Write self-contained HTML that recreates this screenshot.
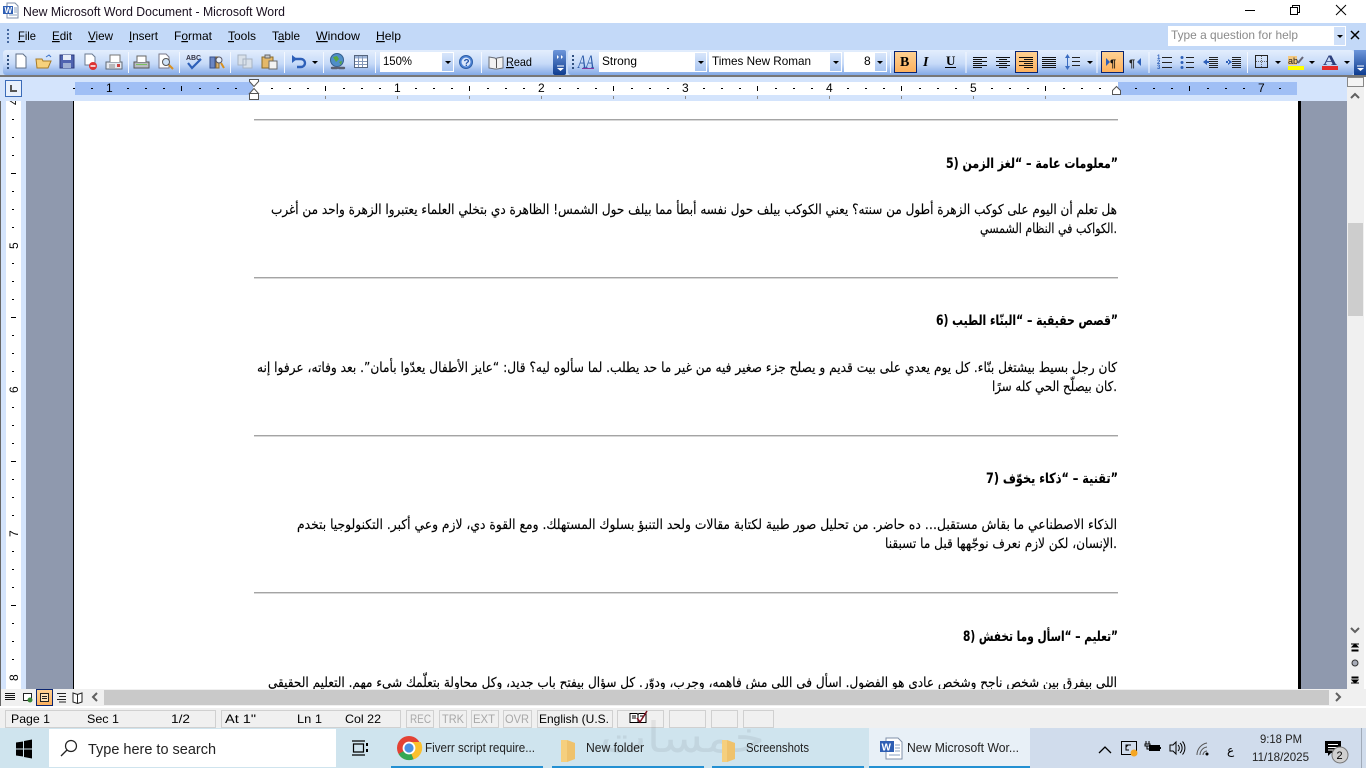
<!DOCTYPE html>
<html><head><meta charset="utf-8"><style>html,body{margin:0;padding:0;width:1366px;height:768px;overflow:hidden;background:#fff}svg{display:block}
text{font-family:"Liberation Sans","DejaVu Sans",sans-serif;font-size:12px;fill:#000}
.ar{font-family:"DejaVu Sans",sans-serif;font-size:13.500px;direction:rtl;stroke:#000;stroke-width:.15px}
.h{font-weight:bold;font-size:14px;stroke-width:.1px}
.s{font-size:12px;fill:#111}.g{fill:#a8a8a8}
.t{font-size:13px;fill:#222}</style></head><body>
<svg width="1366" height="768" viewBox="0 0 1366 768" xmlns="http://www.w3.org/2000/svg">
<defs>
<linearGradient id="tb" x1="0" y1="0" x2="0" y2="1"><stop offset="0" stop-color="#e3eefd"/><stop offset=".55" stop-color="#c6daf8"/><stop offset="1" stop-color="#83a9e6"/></linearGradient>
<linearGradient id="or" x1="0" y1="0" x2="0" y2="1"><stop offset="0" stop-color="#ffd294"/><stop offset="1" stop-color="#fdb05c"/></linearGradient>
<linearGradient id="dd" x1="0" y1="0" x2="0" y2="1"><stop offset="0" stop-color="#d8e6fb"/><stop offset="1" stop-color="#a9c5f1"/></linearGradient>
<linearGradient id="ch" x1="0" y1="0" x2="0" y2="1"><stop offset="0" stop-color="#6d96da"/><stop offset="1" stop-color="#0e3c8f"/></linearGradient>
<pattern id="hr" x="253" y="0" width="144" height="768" patternUnits="userSpaceOnUse"><path fill="#000" d="M18 88h2v1h-2zM36 88h2v1h-2zM54 88h2v1h-2zM90 88h2v1h-2zM108 88h2v1h-2zM126 88h2v1h-2zM72 86h1v5h-1z"/></pattern>
<pattern id="vr" x="0" y="245" width="40" height="144" patternUnits="userSpaceOnUse"><path fill="#000" d="M12 18h2v1h-2zM12 36h2v1h-2zM12 54h2v1h-2zM12 90h2v1h-2zM12 108h2v1h-2zM12 126h2v1h-2zM11 72h5v1h-5z"/></pattern>
<path id="ar" d="M0 0h6l-3 3z" fill="#000"/>
</defs>

<!-- title bar -->
<rect width="1366" height="23" fill="#fff"/>
<g><path d="M7 3h8l3 3v12H7z" fill="#fff" stroke="#7d8ea8"/><rect x="3" y="6" width="10" height="8" fill="#2f5fb4"/><text x="4.500" y="13" style="font-size:8px;font-weight:bold;fill:#fff">W</text><path d="M14 8h3M14 10h3M14 12h3M9 15h8" stroke="#8aa0c0"/></g>
<text x="23" y="16" textLength="262" lengthAdjust="spacingAndGlyphs" style="font-size:12.500px;fill:#1a1020">New Microsoft Word Document - Microsoft Word</text>
<path d="M1245 10.500h10" stroke="#000"/><path d="M1290.500 7.500h7v7h-7zM1292.500 7V5.500h7v7H1298" fill="none" stroke="#000"/><path d="M1336 5l10 10M1346 5l-10 10" stroke="#000" fill="none"/>

<!-- menu bar -->
<rect y="23" width="1366" height="27" fill="#c3d9f8"/>
<path d="M7 29h2v2H7zM7 33h2v2H7zM7 37h2v2H7zM7 41h2v2H7z" fill="#46689f"/>
<g style="font-size:12px">
<text x="18" y="40" textLength="18" lengthAdjust="spacingAndGlyphs"><tspan text-decoration="underline">F</tspan>ile</text>
<text x="52" y="40" textLength="20" lengthAdjust="spacingAndGlyphs"><tspan text-decoration="underline">E</tspan>dit</text>
<text x="88" y="40" textLength="25" lengthAdjust="spacingAndGlyphs"><tspan text-decoration="underline">V</tspan>iew</text>
<text x="129" y="40" textLength="29" lengthAdjust="spacingAndGlyphs"><tspan text-decoration="underline">I</tspan>nsert</text>
<text x="174" y="40" textLength="38" lengthAdjust="spacingAndGlyphs">F<tspan text-decoration="underline">o</tspan>rmat</text>
<text x="228" y="40" textLength="28" lengthAdjust="spacingAndGlyphs"><tspan text-decoration="underline">T</tspan>ools</text>
<text x="272" y="40" textLength="28" lengthAdjust="spacingAndGlyphs">T<tspan text-decoration="underline">a</tspan>ble</text>
<text x="316" y="40" textLength="44" lengthAdjust="spacingAndGlyphs"><tspan text-decoration="underline">W</tspan>indow</text>
<text x="376" y="40" textLength="25" lengthAdjust="spacingAndGlyphs"><tspan text-decoration="underline">H</tspan>elp</text>
</g>
<rect x="1168" y="26" width="178" height="20" fill="#fff"/><rect x="1334" y="27" width="11" height="18" fill="#cfe0f9"/>
<text x="1171" y="39" textLength="127" lengthAdjust="spacingAndGlyphs" style="font-size:12px;fill:#8a8a8a">Type a question for help</text>
<use href="#ar" x="1337" y="35"/>
<path d="M1351 31l8 8M1359 31l-8 8" stroke="#000" stroke-width="1.500"/>

<!-- toolbars -->
<rect y="50" width="1366" height="25" fill="#c3d9f8"/>
<rect x="3" y="50" width="552" height="25" rx="3" fill="url(#tb)"/>
<rect x="553" y="50" width="13" height="25" rx="2" fill="url(#ch)"/>
<rect x="568" y="50" width="786" height="25" rx="3" fill="url(#tb)"/>
<rect x="1354" y="50" width="12" height="25" fill="url(#ch)"/>
<path d="M557 55l2 2-2 2zM561 55l2 2-2 2zM557 68h7l-3.500 3z" fill="#fff" stroke="none"/>
<path d="M557 66h7" stroke="#fff"/>
<path d="M1357 68h7l-3.500 3z" fill="#fff"/><path d="M1357 66h7" stroke="#fff"/>
<rect y="75" width="1366" height="2" fill="#777"/>
<path d="M7 55h2v2H7zM7 59h2v2H7zM7 63h2v2H7zM7 67h2v2H7zM572 55h2v2h-2zM572 59h2v2h-2zM572 63h2v2h-2zM572 67h2v2h-2z" fill="#30507f"/>

<!-- std toolbar icons -->
<path d="M16 54h7l3 3v11H16z" fill="#fff" stroke="#5f6f88"/>
<path d="M36 59h6l1 2h8l-3 7H37z" fill="#f7d17c" stroke="#a77a26"/><path d="M46 57l3-2 2 2" stroke="#3a70c8" fill="none"/>
<rect x="60" y="55" width="14" height="13" fill="#4f63b0" stroke="#2d3b7c"/><rect x="63" y="55" width="8" height="5" fill="#e6ecf8"/><rect x="63" y="63" width="8" height="5" fill="#9fb0d4"/>
<path d="M85 54h7l3 3v8H85z" fill="#fff" stroke="#6b7a90"/><circle cx="93" cy="66" r="4" fill="#d33"/><path d="M90.500 66h5" stroke="#fff" stroke-width="1.500"/>
<path d="M106 62h16v7h-16z" fill="#e7eaf0" stroke="#5f6a78"/><path d="M110 62v-7h10v7" fill="#fff" stroke="#777"/><path d="M109 65h6M109 67h6" stroke="#888"/><rect x="117" y="64" width="3" height="3" fill="#c44"/>
<path d="M128.500 52v21" stroke="#f4f8ff"/>
<path d="M134 62h15v6h-15z" fill="#b9bcc2" stroke="#555"/><path d="M137 62v-6h9v6" fill="#fff" stroke="#666"/><rect x="136" y="64" width="11" height="1" fill="#7bbf5d"/>
<path d="M159 54h7l3 3v11h-10z" fill="#fff" stroke="#778"/><circle cx="166" cy="62" r="3.500" fill="#cfe3f8" stroke="#555"/><path d="M169 65l4 4" stroke="#d89020" stroke-width="2"/>
<path d="M179.500 52v21" stroke="#f4f8ff"/>
<text x="186" y="60" textLength="15" lengthAdjust="spacingAndGlyphs" style="font-size:7px;font-weight:bold;fill:#334">ABC</text>
<path d="M188 63l4 5 9-9" fill="none" stroke="#2d5fb8" stroke-width="2.200"/>
<path d="M210 57h5v11h-5z" fill="#6a86c4" stroke="#36508c"/><path d="M216 57h3v11h-3z" fill="#d8b070" stroke="#8a6a30"/><circle cx="219" cy="60" r="3" fill="#e8f0fa" stroke="#556"/><path d="M221 63l3 5" stroke="#d89020" stroke-width="2"/>
<path d="M230.500 52v21" stroke="#f4f8ff"/>
<path d="M238 55h8v10h-8zM243 59h9v9h-9z" fill="#d9e1ea" stroke="#a7b3c2"/>
<path d="M262 57h11v11h-11z" fill="#e4b868" stroke="#8a6a28"/><path d="M265 55h5v3h-5z" fill="#c9c9c9" stroke="#666"/><path d="M269 61h8v8h-8z" fill="#f3f3f3" stroke="#6a6a6a"/>
<path d="M284.500 52v21" stroke="#f4f8ff"/>
<path d="M293 59h8a4 4 0 0 1 0 8h-4" fill="none" stroke="#2d5fb8" stroke-width="2.400"/><path d="M292 55v8l5-4z" fill="#2d5fb8"/><use href="#ar" x="312" y="61"/>
<path d="M323.500 52v21" stroke="#f4f8ff"/>
<circle cx="337" cy="60" r="6.500" fill="#4f8ec8" stroke="#36608e"/><path d="M333 57l4-1 2 3-3 3zM339 62l3-1-1 4z" fill="#5aa83c"/><path d="M332 68h5M339 68h5" stroke="#5a6070" stroke-width="2.400" stroke-linecap="round"/>
<rect x="354.500" y="55.500" width="13" height="12" fill="#fff" stroke="#56657d"/><rect x="355" y="56" width="12" height="2.500" fill="#9db4d8"/><path d="M355 61.500h12M355 64.500h12M358.500 56v11M362.500 56v11" stroke="#8397b8"/>
<path d="M375.500 52v21" stroke="#f4f8ff"/>
<rect x="380" y="52" width="74" height="20" fill="#fff"/><rect x="442" y="53" width="11" height="18" fill="url(#dd)"/><use href="#ar" x="445" y="61"/>
<text x="383" y="65" textLength="29" lengthAdjust="spacingAndGlyphs" style="font-size:12px">150%</text>
<circle cx="466" cy="62" r="6.500" fill="#4d82d4" stroke="#2d5fa8"/><circle cx="466" cy="62" r="4.500" fill="#dbe8fb"/><text x="463.500" y="66" style="font-size:10px;font-weight:bold;fill:#2353a8">?</text>
<path d="M481.500 52v21" stroke="#f4f8ff"/>
<path d="M489 57l6 1 1 1 1-1 6-1v11l-6 1h-2l-6-1z" fill="#f2f2f2" stroke="#6a6f78"/><path d="M496.500 59v9" stroke="#555"/>
<text x="506" y="66" textLength="26" lengthAdjust="spacingAndGlyphs" style="font-size:12px"><tspan text-decoration="underline">R</tspan>ead</text>

<!-- format toolbar -->
<text x="578" y="68" textLength="16" lengthAdjust="spacingAndGlyphs" style="font-family:'Liberation Serif',serif;font-style:italic;font-size:19px;fill:#2b5aa8">AA</text><path d="M582 68.500h12" stroke="#8a3aa0"/>
<rect x="599" y="52" width="108" height="20" fill="#fff"/><rect x="695" y="53" width="11" height="18" fill="url(#dd)"/><use href="#ar" x="698" y="61"/>
<text x="602" y="65" textLength="35" lengthAdjust="spacingAndGlyphs" style="font-size:12px">Strong</text>
<rect x="709" y="52" width="133" height="20" fill="#fff"/><rect x="830" y="53" width="11" height="18" fill="url(#dd)"/><use href="#ar" x="833" y="61"/>
<text x="712" y="65" textLength="99" lengthAdjust="spacingAndGlyphs" style="font-size:12px">Times New Roman</text>
<rect x="844" y="52" width="43" height="20" fill="#fff"/><rect x="875" y="53" width="11" height="18" fill="url(#dd)"/><use href="#ar" x="877" y="61"/>
<text x="864" y="65" style="font-size:12px">8</text>
<path d="M890.500 52v21" stroke="#f4f8ff"/>
<rect x="894.500" y="51.500" width="22" height="21" fill="url(#or)" stroke="#0a2470"/>
<text x="900" y="66" style="font-family:'Liberation Serif',serif;font-weight:bold;font-size:14px">B</text>
<text x="923" y="66" style="font-family:'Liberation Serif',serif;font-weight:bold;font-style:italic;font-size:14px">I</text>
<text x="946" y="65" style="font-family:'Liberation Serif',serif;font-weight:bold;font-size:13px" textLength="10">U</text><path d="M945 67.500h11" stroke="#000"/>
<path d="M966 52v21" stroke="#f4f8ff"/>
<path d="M973 57.500h14M973 59.500h9M973 61.500h14M973 63.500h9M973 65.500h14M973 67.500h9" stroke="#111"/>
<path d="M996 57.500h14M999 59.500h8M996 61.500h14M999 63.500h8M996 65.500h14M999 67.500h8" stroke="#111"/>
<rect x="1015.500" y="51.500" width="22" height="21" fill="url(#or)" stroke="#0a2470"/>
<path d="M1019 57.500h14M1024 59.500h9M1019 61.500h14M1024 63.500h9M1019 65.500h14M1024 67.500h9" stroke="#111"/>
<path d="M1042 57.500h14M1042 59.500h14M1042 61.500h14M1042 63.500h14M1042 65.500h14M1042 67.500h14" stroke="#111"/>
<path d="M1067.500 58v9" stroke="#3a6bc0"/><path d="M1065 58l2.500-4 2.500 4zM1065 66l2.500 4 2.500-4z" fill="#3a6bc0"/><path d="M1072 57.500h8M1072 61.500h8M1072 65.500h8" stroke="#222"/>
<use href="#ar" x="1087" y="61"/>
<path d="M1097 52v21" stroke="#f4f8ff"/>
<rect x="1101.500" y="51.500" width="22" height="21" fill="url(#or)" stroke="#0a2470"/>
<path d="M1106 58v8l4-4z" fill="#2d5fb8"/><text x="1110" y="67" style="font-weight:bold;font-size:11px;fill:#111">¶</text>
<text x="1129" y="67" style="font-weight:bold;font-size:11px;fill:#222">¶</text><path d="M1141 58v8l-4-4z" fill="#2d5fb8"/>
<path d="M1149 52v21" stroke="#f4f8ff"/>
<text x="1157" y="59" style="font-size:6px;fill:#2d5fb8;font-weight:bold">1</text><text x="1157" y="64" style="font-size:6px;fill:#2d5fb8;font-weight:bold">2</text><text x="1157" y="69" style="font-size:6px;fill:#2d5fb8;font-weight:bold">3</text>
<path d="M1162 57.500h10M1162 62.500h10M1162 67.500h10" stroke="#222"/>
<circle cx="1182" cy="57.500" r="1.500" fill="#2d5fb8"/><circle cx="1182" cy="62.500" r="1.500" fill="#2d5fb8"/><circle cx="1182" cy="67.500" r="1.500" fill="#2d5fb8"/><path d="M1186 57.500h8M1186 62.500h8M1186 67.500h8" stroke="#222"/>
<path d="M1209 57.500h9M1209 59.500h9M1209 61.500h9M1209 63.500h9M1209 65.500h9M1209 67.500h9" stroke="#222"/><path d="M1203 62l4-3v6zM1205 61h4v2h-4z" fill="#2d5fb8"/>
<path d="M1232 57.500h9M1232 59.500h9M1232 61.500h9M1232 63.500h9M1232 65.500h9M1232 67.500h9" stroke="#222"/><path d="M1232 62l-4-3v6zM1226 61h3v2h-3z" fill="#2d5fb8"/>
<path d="M1247.500 52v21" stroke="#f4f8ff"/>
<rect x="1255.500" y="55.500" width="12" height="12" fill="none" stroke="#222"/><path d="M1261.500 56v11M1256 61.500h11" stroke="#666" stroke-dasharray="1 1"/>
<use href="#ar" x="1275" y="61"/>
<rect x="1288" y="56" width="9" height="9" fill="#f3c880"/><text x="1288" y="64" style="font-size:9px;fill:#222">ab</text><path d="M1298 63l5-6" stroke="#667" stroke-width="2"/><rect x="1288" y="66" width="16" height="4" fill="#ff0"/>
<use href="#ar" x="1309" y="61"/>
<text x="1323" y="65" textLength="14" lengthAdjust="spacingAndGlyphs" style="font-family:'Liberation Serif',serif;font-weight:bold;font-size:15px;fill:#2d3f7c">A</text><rect x="1322" y="66" width="16" height="4" fill="#e32b2b"/>
<use href="#ar" x="1344" y="61"/>

<!-- workspace -->
<rect y="101" width="1366" height="588" fill="#fff"/>
<rect x="0" y="77" width="1" height="630" fill="#666"/><rect x="1" y="101" width="5" height="588" fill="#d4e4fc"/>
<rect x="21" y="101" width="5" height="588" fill="#d4e4fc"/>
<rect x="6" y="101" width="15" height="588" fill="url(#vr)"/>
<g style="font-size:11px"><text transform="translate(18 249) rotate(-90)">5</text><text transform="translate(18 393) rotate(-90)">6</text><text transform="translate(18 537) rotate(-90)">7</text><text transform="translate(18 681) rotate(-90)">8</text><text transform="translate(18 105) rotate(-90)">4</text></g>
<rect x="26" y="101" width="47" height="588" fill="#8f99ae"/><rect x="73" y="101" width="1" height="588" fill="#000"/>
<rect x="1298" y="101" width="3" height="588" fill="#000"/><rect x="1301" y="101" width="46" height="588" fill="#8f99ae"/>

<!-- ruler -->
<rect y="77" width="1366" height="24" fill="#d4e4fc"/>
<rect x="5.500" y="80.500" width="16" height="16" fill="#e8f0fc" stroke="#3a6bb8"/><path d="M11 85v6h6" fill="none" stroke="#555" stroke-width="2"/>
<rect x="75" y="82" width="178" height="13" fill="#a0bff5"/><rect x="253" y="82" width="865" height="13" fill="#fff"/><rect x="1118" y="82" width="179" height="13" fill="#a0bff5"/>
<rect x="73" y="82" width="1224" height="13" fill="url(#hr)"/>
<path d="M325 96h1v3h-1zM397 96h1v3h-1zM469 96h1v3h-1zM541 96h1v3h-1zM613 96h1v3h-1zM685 96h1v3h-1zM757 96h1v3h-1zM829 96h1v3h-1zM901 96h1v3h-1zM973 96h1v3h-1zM1045 96h1v3h-1z" fill="#8a8a8a"/>
<g style="font-size:11px"><text x="106" y="92">1</text><text x="394" y="92">1</text><text x="538" y="92">2</text><text x="682" y="92">3</text><text x="826" y="92">4</text><text x="970" y="92">5</text><text x="1258" y="92">7</text></g>
<path d="M249.500 79.500h9v2l-4.500 5-4.500-5z" fill="#fff" stroke="#555"/><path d="M249.500 93.500l4.500-5 4.500 5v0h-9z" fill="#fff" stroke="#555"/><rect x="249.500" y="93.500" width="9" height="6" fill="#fff" stroke="#555"/>
<path d="M1112.500 94.500v-4l4-4 4 4v4z" fill="#fff" stroke="#555"/>

<!-- document -->
<path d="M254 119.500h864M254 277.500h864M254 435.500h864M254 592.500h864" stroke="#a4a4a4"/>
<path d="M254 120.500h864M254 278.500h864M254 436.500h864M254 593.500h864" stroke="#d8d8d8"/>

<text class="ar h" x="1118" y="168" text-anchor="start" textLength="172" lengthAdjust="spacingAndGlyphs">”معلومات عامة – “لغز الزمن (5</text>
<text class="ar" x="1117" y="214" text-anchor="start" textLength="846" lengthAdjust="spacingAndGlyphs">هل تعلم أن اليوم على كوكب الزهرة أطول من سنته؟ يعني الكوكب بيلف حول نفسه أبطأ مما بيلف حول الشمس! الظاهرة دي بتخلي العلماء يعتبروا الزهرة واحد من أغرب</text>
<text class="ar" x="1117" y="233" text-anchor="start" textLength="137" lengthAdjust="spacingAndGlyphs">.الكواكب في النظام الشمسي</text>

<text class="ar h" x="1118" y="325" text-anchor="start" textLength="182" lengthAdjust="spacingAndGlyphs">”قصص حقيقية – “البنّاء الطيب (6</text>
<text class="ar" x="1117" y="372" text-anchor="start" textLength="860" lengthAdjust="spacingAndGlyphs">كان رجل بسيط بيشتغل بنّاء. كل يوم يعدي على بيت قديم و يصلح جزء صغير فيه من غير ما حد يطلب. لما سألوه ليه؟ قال: “عايز الأطفال يعدّوا بأمان”. بعد وفاته، عرفوا إنه</text>
<text class="ar" x="1117" y="391" text-anchor="start" textLength="125" lengthAdjust="spacingAndGlyphs">.كان بيصلّح الحي كله سرًا</text>

<text class="ar h" x="1118" y="483" text-anchor="start" textLength="132" lengthAdjust="spacingAndGlyphs">”تقنية – “ذكاء يخوّف (7</text>
<text class="ar" x="1117" y="529" text-anchor="start" textLength="820" lengthAdjust="spacingAndGlyphs">الذكاء الاصطناعي ما بقاش مستقبل… ده حاضر. من تحليل صور طبية لكتابة مقالات ولحد التنبؤ بسلوك المستهلك. ومع القوة دي، لازم وعي أكبر. التكنولوجيا بتخدم</text>
<text class="ar" x="1117" y="548" text-anchor="start" textLength="232" lengthAdjust="spacingAndGlyphs">.الإنسان، لكن لازم نعرف نوجّهها قبل ما تسبقنا</text>

<text class="ar h" x="1118" y="641" text-anchor="start" textLength="155" lengthAdjust="spacingAndGlyphs">”تعليم – “اسأل وما تخفش (8</text>
<text class="ar" x="1117" y="687" text-anchor="start" textLength="849" lengthAdjust="spacingAndGlyphs">اللي بيفرق بين شخص ناجح وشخص عادي هو الفضول. اسأل في اللي مش فاهمه، وجرب، ودوّر. كل سؤال بيفتح باب جديد، وكل محاولة بتعلّمك شيء مهم. التعليم الحقيقي</text>

<!-- v scrollbar -->
<rect x="1347" y="77" width="19" height="630" fill="#f0f0f0"/>
<rect x="1364" y="77" width="2" height="631" fill="#fff"/>
<rect x="1347.500" y="77.500" width="16" height="9" fill="#f4f4f4" stroke="#888"/>
<path d="M1351 98l4-4 4 4" fill="none" stroke="#606060" stroke-width="2"/>
<rect x="1348" y="223" width="15" height="93" fill="#cdcdcd"/>
<path d="M1351 628l4 4 4-4" fill="none" stroke="#606060" stroke-width="2"/>
<path d="M1351 644h8M1355 644l-3 3h6zM1352 650h6v1h-6z" fill="#000" stroke="#000"/>
<circle cx="1355" cy="663" r="3" fill="#a8acb8" stroke="#333"/>
<path d="M1352 677h6v1h-6zM1351 683h8M1355 683l-3-3h6z" fill="#000" stroke="#000"/>

<!-- h scrollbar -->
<rect x="0" y="689" width="1366" height="18" fill="#f0f0f0"/>
<rect x="0" y="689" width="1" height="18" fill="#666"/>
<rect x="104" y="690" width="1225" height="15" fill="#c9c9c9"/>
<path d="M5 693.500h10M5 695.500h10M5 697.500h10M5 699.500h10" stroke="#111"/>
<path d="M23.500 693.500h8v7h-8z" fill="#fff" stroke="#222"/><circle cx="30" cy="700" r="2.500" fill="#3a8a3a"/>
<rect x="36.500" y="689.500" width="16" height="16" fill="url(#or)" stroke="#0a2470"/><path d="M40.500 693.500h8v8h-8zM42 696.500h5M42 698.500h5" fill="#fde2b8" stroke="#222"/>
<path d="M57 693.500h9M59 696.500h7M57 699.500h9M59 702h7" stroke="#222"/>
<path d="M73 693l4.500 1.500 4.500-1.500v9l-4.500 1.500-4.500-1.500zM77.500 694.500v9" fill="#fff" stroke="#222"/>
<path d="M97 693l-4 4 4 4" fill="none" stroke="#606060" stroke-width="2"/>
<path d="M1336 693l4 4-4 4" fill="none" stroke="#606060" stroke-width="2"/>

<!-- status bar -->
<rect y="706" width="1366" height="2" fill="#fff"/>
<rect y="708" width="1366" height="20" fill="#f0f0f0"/>
<g fill="none" stroke="#d0d0d0">
<rect x="5.500" y="710.500" width="210" height="17"/><rect x="221.500" y="710.500" width="179" height="17"/><rect x="406.500" y="710.500" width="27" height="17"/><rect x="439.500" y="710.500" width="27" height="17"/><rect x="471.500" y="710.500" width="27" height="17"/><rect x="503.500" y="710.500" width="28" height="17"/><rect x="537.500" y="710.500" width="75" height="17"/><rect x="617.500" y="710.500" width="46" height="17"/><rect x="669.500" y="710.500" width="36" height="17"/><rect x="711.500" y="710.500" width="26" height="17"/><rect x="743.500" y="710.500" width="30" height="17"/>
</g>
<g style="font-size:12px">
<text x="11" y="723" textLength="39" lengthAdjust="spacingAndGlyphs">Page 1</text>
<text x="87" y="723" textLength="32" lengthAdjust="spacingAndGlyphs">Sec 1</text>
<text x="171" y="723" textLength="19" lengthAdjust="spacingAndGlyphs">1/2</text>
<text x="225" y="723" textLength="31" lengthAdjust="spacingAndGlyphs">At 1"</text>
<text x="297" y="723" textLength="25" lengthAdjust="spacingAndGlyphs">Ln 1</text>
<text x="345" y="723" textLength="36" lengthAdjust="spacingAndGlyphs">Col 22</text>
<text class="g" x="410" y="723" textLength="21" lengthAdjust="spacingAndGlyphs">REC</text>
<text class="g" x="442" y="723" textLength="22" lengthAdjust="spacingAndGlyphs">TRK</text>
<text class="g" x="473" y="723" textLength="22" lengthAdjust="spacingAndGlyphs">EXT</text>
<text class="g" x="505" y="723" textLength="24" lengthAdjust="spacingAndGlyphs">OVR</text>
<text x="539" y="723" textLength="70" lengthAdjust="spacingAndGlyphs">English (U.S.</text>
</g>
<path d="M630 713.500h7l1 1 1-1h7v9h-16z" fill="#fff" stroke="#000"/><path d="M638 714v8M632 716h4M632 718h4M640 716h4" stroke="#000"/><path d="M637 718l3 4 7-11" fill="none" stroke="#7a1020" stroke-width="1.500"/>

<!-- taskbar -->
<rect y="728" width="1030" height="40" fill="#cfe4ee"/>
<rect x="1030" y="728" width="336" height="40" fill="#d0dcec"/>
<rect x="869" y="728" width="161" height="40" fill="#e8f0f7"/>
<text x="600" y="752" textLength="165" lengthAdjust="spacingAndGlyphs" style="font-family:'DejaVu Sans',sans-serif;font-size:42px;fill:#000;opacity:.06;direction:rtl" text-anchor="end">خمسات</text>
<path d="M391 766h152v2H391zM552 766h152v2H552zM712 766h152v2H712zM869 766h161v2H869z" fill="#2390d2"/>
<path d="M16 743l7-1v7h-7zM24 741.500l8-1.500v9h-8zM16 750h7v7l-7-1zM24 750h8v9l-8-1.500z" fill="#000" transform="translate(0 -.5)"/>
<rect x="49" y="729" width="287" height="38" fill="#fff"/>
<circle cx="71" cy="746" r="5.500" fill="none" stroke="#222" stroke-width="1.200"/><path d="M67 750l-6 6" stroke="#222" stroke-width="1.300"/>
<text x="88" y="754" textLength="128" lengthAdjust="spacingAndGlyphs" style="font-size:15px;fill:#222">Type here to search</text>
<path d="M352 741h13M352 755h13M353.500 744h10v8h-10z" fill="none" stroke="#000" stroke-width="1.200"/><path d="M366 743h2v3h-2zM366 749h2v3h-2z" fill="#000"/>
<circle cx="409" cy="748" r="12" fill="#e34234"/><path d="M409 748L398.600 754a12 12 0 0 0 15 5.300z" fill="#34a853"/><path d="M409 748l4.600 11.300A12 12 0 0 0 420.700 742H409z" fill="#fbc02d"/><circle cx="409" cy="748" r="5.500" fill="#4a90e2" stroke="#fff" stroke-width="1.800"/>
<text class="t" x="425" y="752" textLength="110" lengthAdjust="spacingAndGlyphs">Fiverr script require...</text>
<path d="M561 740h6l8 3v16l-8 3h-6z" fill="#f5cf7e"/><path d="M567 740v22l8-3v-16z" fill="#e9b55a" opacity=".5"/>
<text class="t" x="586" y="752" textLength="58" lengthAdjust="spacingAndGlyphs">New folder</text>
<path d="M722 740h5l8 3v16l-8 3h-5z" fill="#f5cf7e"/><path d="M727 740v22l8-3v-16z" fill="#e9b55a" opacity=".5"/>
<text class="t" x="746" y="752" textLength="63" lengthAdjust="spacingAndGlyphs">Screenshots</text>
<path d="M886 738h12l4 4v17h-16z" fill="#fff" stroke="#8090a8"/><rect x="880" y="741" width="14" height="11" fill="#2f5fb4"/><text x="881.500" y="750.500" style="font-size:10px;font-weight:bold;fill:#fff">W</text><path d="M895 745h5M895 748h5M895 751h5M889 755h11" stroke="#8aa0c0"/>
<text class="t" x="907" y="752" textLength="112" lengthAdjust="spacingAndGlyphs">New Microsoft Wor...</text>
<path d="M1099 753l6-6 6 6" fill="none" stroke="#000" stroke-width="1.300"/>
<rect x="1121.500" y="741.500" width="15" height="13" fill="none" stroke="#000"/><path d="M1131 745h-5v5h3M1126 747l2-2" fill="none" stroke="#000"/><circle cx="1134" cy="753" r="3.500" fill="#f5a623"/>
<rect x="1149" y="745" width="11" height="6" fill="#000"/><path d="M1146 741v3M1149 741v3M1145 744h5v2h-5zM1147 746v3h2" fill="none" stroke="#000"/><path d="M1160 747h1v2h-1z"/>
<path d="M1170 745h3l3-3v12l-3-3h-3z" fill="none" stroke="#000"/><path d="M1178 745a4 4 0 0 1 0 6M1180 743a7 7 0 0 1 0 10M1182.500 741.500a10 10 0 0 1 0 13" fill="none" stroke="#000"/>
<path d="M1197 755a12 12 0 0 1 10-12M1200 755a8 8 0 0 1 7-8M1203 755a4 4 0 0 1 4-4" fill="none" stroke="#555"/><circle cx="1207" cy="754" r="1.500" fill="#000"/>
<text x="1227" y="754" style="font-family:'DejaVu Sans',sans-serif;font-size:12px">ع</text>
<text x="1260" y="743" textLength="42" lengthAdjust="spacingAndGlyphs" style="font-size:12px;fill:#222">9:18 PM</text>
<text x="1252" y="761" textLength="57" lengthAdjust="spacingAndGlyphs" style="font-size:12px;fill:#222">11/18/2025</text>
<path d="M1325 741h16v12h-10l-3 3v-3h-3z" fill="#000"/><path d="M1328 744.500h10M1328 747.500h10M1328 750h6" stroke="#fff"/>
<circle cx="1340" cy="755" r="8" fill="#d0d0d0" stroke="#777"/><text x="1336.500" y="759" style="font-size:11px">2</text>
<rect x="1361" y="728" width="1" height="40" fill="#a0aab8"/>
</svg></body></html>
